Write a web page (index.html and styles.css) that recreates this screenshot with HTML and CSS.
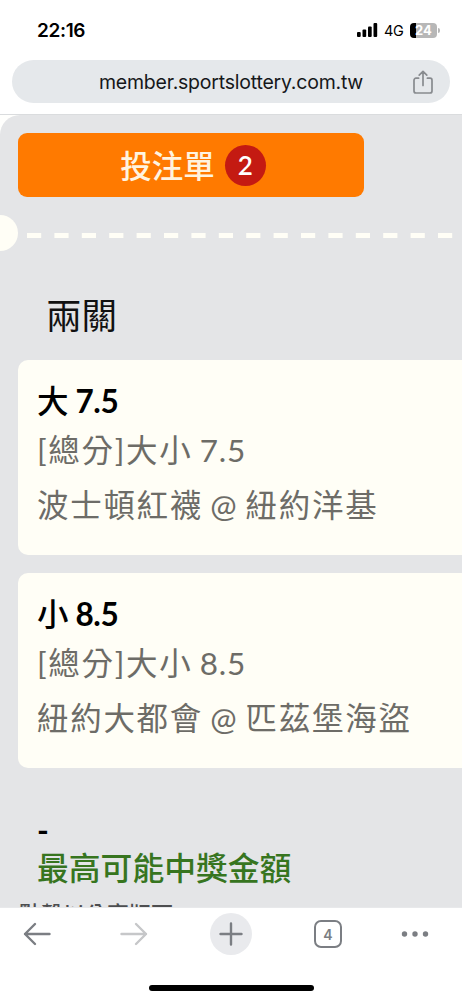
FILE: index.html
```html
<!DOCTYPE html>
<html lang="zh-Hant">
<head>
<meta charset="utf-8">
<meta name="viewport" content="width=device-width, initial-scale=1">
<title>投注單</title>
<link rel="stylesheet" href="styles.css">
</head>
<body>
<header class="browser-top">
  <div class="status">
    <span class="clock">22:16</span>
    <div class="status-right">
      <svg class="signal" width="21" height="14" viewBox="0 0 21 14"><rect x="0" y="9" width="3.7" height="5" rx="1"/><rect x="5.5" y="6.5" width="3.7" height="7.5" rx="1"/><rect x="11" y="3.5" width="3.7" height="10.5" rx="1"/><rect x="16.5" y="0" width="3.7" height="14" rx="1"/></svg>
      <span class="network">4G</span>
      <span class="battery">24</span><span class="battery-tip"></span>
    </div>
  </div>
  <div class="address">
    <span class="url">member.sportslottery.com.tw</span>
    <svg class="share" width="20" height="24" viewBox="0 0 20 24"><path d="M5.6 8.2H3a2 2 0 0 0-2 2V21a2 2 0 0 0 2 2h14a2 2 0 0 0 2-2V10.200a2 2 0 0 0-2-2h-2.600M10 15.500V1.500M6.200 5.200L10 1.400l3.800 3.800"/></svg>
  </div>
</header>
<main class="page">
  <div class="slip">
    <div class="slip-button"><span class="slip-title">投注單</span><span class="count">2</span></div>
    <div class="tear">
      <span class="notch"></span>
      <svg class="dashes" width="435" height="5" viewBox="0 0 435 5"><path d="M0 2.500H435"/></svg>
    </div>
    <h1 class="heading">兩關</h1>
    <section class="bet">
      <h2>大 <span class="line">7.5</span></h2>
      <p>[總分]大小 <span class="total">7.5</span></p>
      <p class="teams">波士頓紅襪 @ 紐約洋基</p>
    </section>
    <section class="bet">
      <h2>小 <span class="line">8.5</span></h2>
      <p>[總分]大小 <span class="total">8.5</span></p>
      <p class="teams">紐約大都會 @ 匹茲堡海盜</p>
    </section>
    <div class="prize"><div class="amount">-</div><div class="prize-label">最高可能中獎金額</div></div>
    <div class="note">點擊以分享版面</div>
  </div>
</main>
<footer class="browser-bottom">
  <nav class="tools">
    <svg width="42" height="42" viewBox="0 0 42 42"><path d="M39.500 21H15M25 11L15 21l10 10"/></svg>
    <svg class="faded" width="42" height="42" viewBox="0 0 42 42"><path d="M6.500 21H31M21 11l10 10-10 10"/></svg>
    <svg class="plus" width="42" height="42" viewBox="0 0 42 42"><path d="M10.500 21h21M21 10.500v21"/></svg>
    <span class="tabs">4</span>
    <svg class="more" width="42" height="42" viewBox="0 0 42 42"><circle cx="10.500" cy="21" r="2.700"/><circle cx="21" cy="21" r="2.700"/><circle cx="31.500" cy="21" r="2.700"/></svg>
  </nav>
  <div class="home"></div>
</footer>
</body>
</html>
```
FILE: styles.css
```css
* { box-sizing: border-box; margin: 0; }
body {
  width: 462px;
  height: 1000px;
  overflow: hidden;
  display: flex;
  flex-direction: column;
  background: #fff;
  font-family: Lato, "Noto Sans CJK TC", sans-serif;
}
.browser-top {
  flex: none;
  height: 115px;
  border-bottom: 1px solid #dadcde;
  font-family: Inter, sans-serif;
}
.status {
  height: 60px;
  padding: 0 22px 0 37px;
  display: flex;
  align-items: center;
  justify-content: space-between;
}
.clock { font-size: 19px; font-weight: 600; letter-spacing: -0.35px; }
.status-right { display: flex; align-items: center; }
.signal { margin-right: 6px; }
.network { width: 26px; font-size: 14.5px; letter-spacing: -0.4px; }
.battery {
  width: 27px;
  height: 15px;
  border-radius: 4px;
  background: linear-gradient(90deg, #000 6px, #b7b7b7 6px);
  color: #fff;
  font-size: 13px;
  font-weight: 700;
  line-height: 15px;
  text-align: center;
}
.battery-tip { width: 2px; height: 5px; margin-left: 1px; border-radius: 0 2px 2px 0; background: #b7b7b7; }
.address {
  height: 43px;
  margin: 0 12px;
  padding: 0 17px 0 87px;
  border-radius: 22px;
  background: #e5e8eb;
  display: flex;
  align-items: center;
  justify-content: space-between;
}
.url { font-size: 19.5px; letter-spacing: -0.22px; color: #15171a; white-space: nowrap; }
.share { fill: none; stroke: #888b8f; stroke-width: 1.7; stroke-linecap: round; stroke-linejoin: round; }
.page { height: 792px; overflow: hidden; background: #fffffd; }
.slip { height: 820px; padding: 18px 0 0 18px; border-radius: 20px 0 0 0; background: #e4e5e7; }
.slip-button {
  width: 346px;
  height: 64px;
  padding-left: 4px;
  border-radius: 9px;
  background: #ff7a00;
  color: #fff4e0;
  display: flex;
  align-items: center;
  justify-content: center;
  gap: 10px;
  font-size: 31.5px;
  font-weight: 500;
}
.slip-title { margin-bottom: 3px; }
.count {
  width: 41px;
  height: 41px;
  border-radius: 50%;
  background: #c41a12;
  color: #fff;
  font-size: 26px;
  font-weight: 600;
  line-height: 41px;
  text-align: center;
}
.tear { height: 36px; margin: 18px 0 0 -18px; display: flex; align-items: center; }
.notch { flex: none; width: 18px; height: 36px; margin-right: 9px; border-radius: 0 18px 18px 0; background: #fffef6; }
.dashes { margin-top: 4px; fill: none; stroke: #fffef6; stroke-width: 5; stroke-dasharray: 14.200 13.200; }
.heading { height: 109px; padding: 39px 0 0 28px; font-size: 35.5px; line-height: 52px; font-weight: 400; color: #111; }
.bet {
  height: 195px;
  margin-bottom: 18px;
  padding: 17px 0 0 19px;
  border-radius: 10px 0 0 10px;
  background: #fffef6;
  white-space: nowrap;
}
.bet h2 { font-size: 31.5px; line-height: 48px; font-weight: 500; color: #000; word-spacing: -1px; }
.line { font-weight: 700; letter-spacing: -0.4px; }
.bet p { font-size: 31.5px; line-height: 50px; letter-spacing: 1.7px; word-spacing: -2.5px; color: #6d6c67; font-weight: 400; }
.total { letter-spacing: 0.8px; }
.bet .teams { margin-top: 5px; }
.prize { padding: 26px 0 0 19px; font-size: 31.8px; font-weight: 500; line-height: 37px; color: #37751f; }
.amount { font-weight: 700; color: #000; }
.prize-label { margin-top: 1px; }
.note { margin: 11px 0 0 1px; font-size: 22px; line-height: 32px; font-weight: 500; color: #4d4e50; }
.browser-bottom { flex: 1; border-top: 1px solid #e8e9eb; background: #fff; }
.tools { padding: 5px 0 0 10px; display: grid; grid-template-columns: 105px 95px 104px 80px 42px; align-items: center; }
.tools svg { fill: none; stroke: #7b7e83; stroke-width: 2.4; stroke-linecap: round; stroke-linejoin: round; }
.tools .faded { stroke: #c6c7c9; }
.tools .plus { border-radius: 50%; background: #e9eaed; }
.tools .more { fill: #7b7e83; stroke: none; }
.tabs {
  width: 28px;
  height: 28px;
  border: 2px solid #7b7e83;
  border-radius: 7px;
  color: #7b7e83;
  font: 600 14px/25px Inter, sans-serif;
  text-align: center;
}
.home { width: 165px; height: 6px; margin: 30px auto 0; border-radius: 3px; background: #000; }
```
